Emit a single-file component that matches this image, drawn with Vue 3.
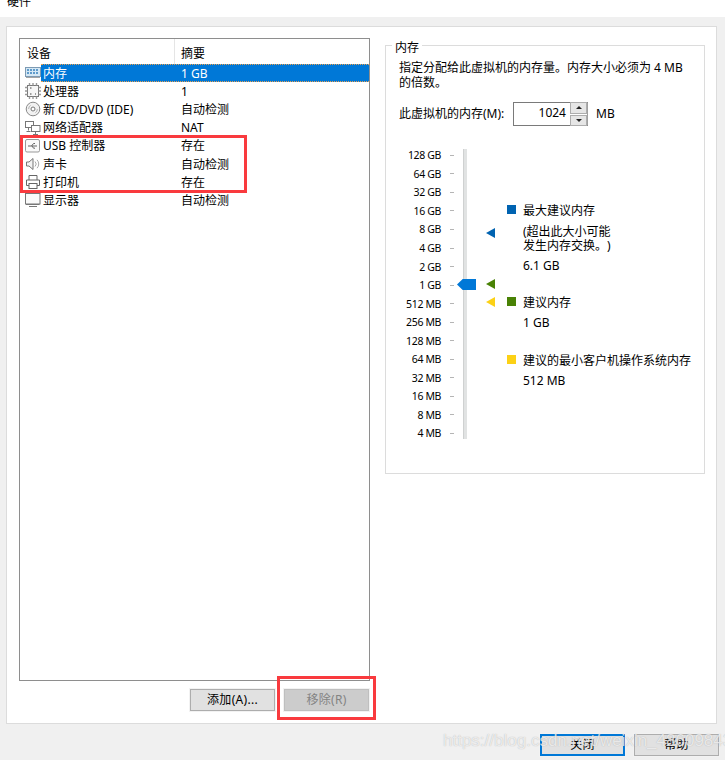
<script setup>
const devices = [
  { icon: 'mem', name: '内存', sum: '1 GB', sel: true },
  { icon: 'cpu', name: '处理器', sum: '1' },
  { icon: 'cd', name: '新 CD/DVD (IDE)', sum: '自动检测' },
  { icon: 'net', name: '网络适配器', sum: 'NAT' },
  { icon: 'usb', name: 'USB 控制器', sum: '存在' },
  { icon: 'snd', name: '声卡', sum: '自动检测' },
  { icon: 'prt', name: '打印机', sum: '存在' },
  { icon: 'dsp', name: '显示器', sum: '自动检测' }
]
const scale = ['128 GB', '64 GB', '32 GB', '16 GB', '8 GB', '4 GB', '2 GB', '1 GB', '512 MB', '256 MB', '128 MB', '64 MB', '32 MB', '16 MB', '8 MB', '4 MB']
</script>

<template>
  <div class="page">
    <div class="title"><span>硬件</span></div>
    <div class="panel">
      <div class="left">
        <div class="list">
          <div class="head">
            <div class="hc hc1">设备</div>
            <div class="hc">摘要</div>
          </div>
          <div class="rows">
            <div v-for="d in devices" :key="d.name" class="row">
              <svg class="ico" viewBox="0 0 16 16" fill="none" stroke="#8a8a8a" stroke-width="1">
                <template v-if="d.icon === 'mem'">
                  <rect x="0.5" y="2.5" width="15" height="9" fill="#d5e8f5" stroke="#7d9ab3" />
                  <path d="M2 5h12M2 8h12" stroke="#5f9bcb" stroke-width="2" stroke-dasharray="2 1" />
                  <path d="M1 12.5h14" stroke="#a5a5a5" />
                </template>
                <template v-else-if="d.icon === 'cpu'">
                  <rect x="2.5" y="2.5" width="11" height="11" fill="#f6f6f6" stroke="#777" />
                  <path d="M4.5 0v2.5M8 0v2.5M11.5 0v2.5M4.5 13.5V16M8 13.5V16M11.5 13.5V16M0 4.5h2.5M0 8h2.5M0 11.5h2.5M13.5 4.5H16M13.5 8H16M13.5 11.5H16" stroke="#999" stroke-width="1.4" />
                  <path d="M5 5h1.5M5 11h1.5M10 11h1" stroke="#444" />
                </template>
                <template v-else-if="d.icon === 'cd'">
                  <circle cx="8" cy="8" r="6.8" fill="#f1f1f1" />
                  <circle cx="8" cy="8" r="2" fill="#fff" stroke="#777" />
                  <path d="M3.6 8a4.4 4.4 0 0 1 2-3.7M12.4 8a4.4 4.4 0 0 1-2 3.7" stroke="#b5b5b5" />
                </template>
                <template v-else-if="d.icon === 'net'">
                  <rect x="0.5" y="1.5" width="8" height="6" stroke="#777" />
                  <rect x="6.5" y="5.5" width="8.5" height="6" fill="#fff" stroke="#777" />
                  <path d="M3.5 7.5v3M10.5 11.5v2.5M8 14.5h5M1.5 11.5h4" stroke="#777" />
                </template>
                <template v-else-if="d.icon === 'usb'">
                  <rect x="0.5" y="1.5" width="14" height="12.5" rx="1.5" stroke="#999" fill="#fafafa" />
                  <path d="M3 8h9M6.5 8l2-2.5h1.5M7 8l1.5 2.2h1.5" stroke="#666" />
                </template>
                <template v-else-if="d.icon === 'snd'">
                  <path d="M1.5 6h2.5l4-3.5v11l-4-3.5H1.5z" stroke="#777" fill="#f4f4f4" />
                  <path d="M10 5.5a3.5 3.5 0 0 1 0 5M12 3.8a6 6 0 0 1 0 8.4" stroke="#aaa" />
                </template>
                <template v-else-if="d.icon === 'prt'">
                  <path d="M4 6V1.5h8V6M4 11.5H1.5V6h13v5.5H12" stroke="#666" />
                  <rect x="4" y="9.5" width="8" height="5" stroke="#666" />
                </template>
                <template v-else>
                  <rect x="0.5" y="1.5" width="14.5" height="10.5" fill="#fafafa" stroke="#777" />
                  <path d="M1 12.5h13.5M4 14.5h8" stroke="#777" />
                </template>
              </svg>
              <div class="cells" :class="{ sel: d.sel }">
                <span class="c1">{{ d.name }}</span>
                <span class="c2">{{ d.sum }}</span>
              </div>
            </div>
          </div>
        </div>
        <div class="list-btns">
          <button class="btn">添加(A)...</button>
          <button class="btn off">移除(R)</button>
        </div>
      </div>

      <div class="group">
        <span class="legend">内存</span>
        <p class="desc">指定分配给此虚拟机的内存量。内存大小必须为 4 MB<br />的倍数。</p>
        <div class="spin-row">
          <span class="spin-label">此虚拟机的内存(M):</span>
          <div class="spin">
            <span class="spin-val">1024</span>
            <div class="spin-btns">
              <span class="sb"><i class="up"></i></span>
              <span class="sb"><i class="down"></i></span>
            </div>
          </div>
          <span class="unit">MB</span>
        </div>
        <div class="chart">
          <div class="scale">
            <div v-for="(s, i) in scale" :key="i" class="tick-row">
              <span class="lab">{{ s }}</span>
              <span class="tick"></span>
            </div>
          </div>
          <div class="track"></div>
          <span class="thumb"></span>
          <span class="arrow a-blue"></span>
          <span class="arrow a-green"></span>
          <span class="arrow a-yellow"></span>
          <div class="key">
            <div class="key-item k1">
              <span class="sq blue"></span>
              <div>
                <div>最大建议内存</div>
                <div class="note">(超出此大小可能<br />发生内存交换。)</div>
                <div class="val">6.1 GB</div>
              </div>
            </div>
            <div class="key-item k2">
              <span class="sq green"></span>
              <div>
                <div>建议内存</div>
                <div class="val">1 GB</div>
              </div>
            </div>
            <div class="key-item k3">
              <span class="sq yellow"></span>
              <div>
                <div>建议的最小客户机操作系统内存</div>
                <div class="val">512 MB</div>
              </div>
            </div>
          </div>
        </div>
      </div>
    </div>
    <div class="footer">
      <button class="btn fb primary">关闭</button>
      <button class="btn fb">帮助</button>
    </div>

    <span class="mark m1"></span>
    <span class="mark m2"></span>
    <span class="wm">https://blog.csdn.net/weixin_48609843</span>
  </div>
</template>

<style scoped>
.page {
  position: relative;
  width: 725px;
  height: 760px;
  overflow: hidden;
  background: #f0f0f0;
  color: #000;
  font: 12px/14px "Noto Sans", "Noto Sans CJK SC", sans-serif;
  text-spacing-trim: space-all;
}
.title {
  height: 17px;
  padding-left: 7px;
  background: #fff;
  overflow: hidden;
}
.title span {
  display: block;
  margin-top: -5px;
  line-height: 14px;
}
.panel {
  display: flex;
  align-items: flex-start;
  gap: 15px;
  box-sizing: border-box;
  width: 711px;
  height: 698px;
  margin: 9px 0 0 6px;
  padding: 11px 11px 0 12px;
  background: #fff;
  border: 1px solid #dcdcdc;
}
.left {
  width: 351px;
}
.list {
  box-sizing: border-box;
  height: 643px;
  border: 1px solid #8e8e8e;
}
.head {
  display: flex;
  height: 25px;
}
.hc {
  padding: 8px 0 0 6px;
}
.hc1 {
  box-sizing: border-box;
  width: 155px;
  padding-left: 7px;
  border-right: 1px solid #e5e5e5;
}
.rows {
  display: grid;
  grid-auto-rows: 18.2px;
}
.row {
  display: flex;
  align-items: center;
}
.ico {
  flex: none;
  width: 16px;
  height: 16px;
  margin-left: 5px;
}
.cells {
  display: flex;
  flex: 1;
  align-self: stretch;
  align-items: center;
  box-sizing: border-box;
  padding-top: 1px;
}
.cells.sel {
  background: #0078d7;
  color: #fff;
  border-top: 1px dotted #e8a050;
  border-bottom: 1px dotted #e8a050;
}
.c1 {
  width: 137px;
  padding-left: 2px;
  white-space: nowrap;
}
.c2 {
  padding-left: 1px;
}
.list-btns {
  display: flex;
  justify-content: flex-end;
  gap: 9px;
  margin-top: 8px;
  padding-right: 1px;
}
.btn {
  box-sizing: border-box;
  width: 85px;
  height: 22px;
  padding: 0;
  font: inherit;
  letter-spacing: 0.3px;
  color: #000;
  background: #e1e1e1;
  border: 1px solid #adadad;
  box-shadow: 0 0 0 1px #f2f2f2;
}
.btn.off {
  color: #838383;
  background: #cccccc;
  border-color: #bfbfbf;
}
.group {
  position: relative;
  box-sizing: border-box;
  width: 320px;
  height: 429px;
  margin-top: 7px;
  padding: 15px 13px 0;
  border: 1px solid #dcdcdc;
}
.legend {
  position: absolute;
  top: -5px;
  left: 6px;
  padding: 0 3px;
  background: #fff;
}
.desc {
  margin: 0;
  line-height: 14.5px;
}
.spin-row {
  display: flex;
  align-items: center;
  margin-top: 12px;
  height: 24px;
}
.spin-label {
  width: 114px;
}
.spin {
  display: flex;
  align-items: center;
  box-sizing: border-box;
  width: 75px;
  height: 24px;
  border: 1px solid #7a7a7a;
  border-right-color: #a0a0a0;
}
.spin-val {
  width: 53px;
  text-align: right;
  margin-top: -2px;
}
.spin-btns {
  display: flex;
  flex-direction: column;
  gap: 1px;
  margin-left: 4px;
}
.sb {
  display: flex;
  align-items: center;
  justify-content: center;
  width: 15px;
  height: 9.5px;
  background: #e6e6e6;
  border: 0.5px solid #adadad;
}
.up {
  border: 3px solid transparent;
  border-top: 0;
  border-bottom: 3px solid #222;
}
.down {
  border: 3px solid transparent;
  border-bottom: 0;
  border-top: 3px solid #222;
}
.unit {
  margin-left: 8px;
}
.chart {
  position: relative;
  display: flex;
  margin-top: 20px;
}
.scale {
  width: 57px;
}
.tick-row {
  display: flex;
  align-items: center;
  justify-content: flex-end;
  height: 18.55px;
}
.lab {
  font-size: 10.5px;
  letter-spacing: -0.35px;
  white-space: nowrap;
}
.tick {
  width: 4px;
  height: 1px;
  margin-left: 9px;
  background: #b5b5b5;
}
.track {
  width: 4px;
  height: 290px;
  margin: 3px 0 0 9px;
  background: #e1e3e3;
  border: 0 solid #cfd1d1;
  border-left-width: 1px;
  box-sizing: border-box;
}
.thumb {
  position: absolute;
  left: 58px;
  top: 133px;
  width: 19px;
  height: 11px;
  background: #0078d7;
  clip-path: polygon(0 50%, 30% 0, 100% 0, 100% 100%, 30% 100%);
}
.arrow {
  position: absolute;
  left: 87px;
  width: 9px;
  height: 10px;
  clip-path: polygon(0 50%, 100% 0, 100% 100%);
}
.a-blue {
  top: 82px;
  background: #0063b1;
}
.a-green {
  top: 133px;
  background: #498205;
}
.a-yellow {
  top: 151px;
  background: #fcd116;
}
.key {
  margin-left: 40px;
  padding-top: 58px;
}
.key-item {
  display: flex;
  gap: 7px;
}
.sq {
  flex: none;
  width: 9px;
  height: 9px;
  margin-top: 1px;
}
.blue {
  background: #0063b1;
}
.green {
  background: #498205;
}
.yellow {
  background: #fcd116;
}
.note {
  margin-top: 7px;
}
.val {
  margin-top: 6px;
  white-space: nowrap;
}
.k2 {
  margin-top: 23px;
}
.k3 {
  margin-top: 24px;
  white-space: nowrap;
}
.footer {
  display: flex;
  gap: 9px;
  margin: 10px 0 0 540px;
}
.fb {
  width: 85px;
}
.primary {
  border: 2px solid #0078d7;
}
.mark {
  position: absolute;
  box-sizing: border-box;
  border: 3px solid #f93a3e;
}
.m1 {
  left: 20px;
  top: 135px;
  width: 227px;
  height: 58px;
}
.m2 {
  left: 277px;
  top: 676px;
  width: 99px;
  height: 44px;
}
.wm {
  position: absolute;
  left: 443px;
  top: 731px;
  font: 17px/20px "Liberation Sans", sans-serif;
  white-space: nowrap;
  color: rgba(255, 255, 255, 0.72);
  text-shadow: 0 0 1px rgba(120, 120, 120, 0.55);
}
</style>
